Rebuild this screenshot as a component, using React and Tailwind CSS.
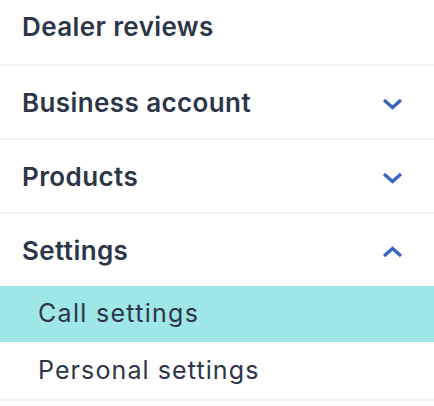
const font = { fontFamily: "Inter, 'Noto Sans', sans-serif" }

function Chevron({ up }) {
  return (
    <svg
      width="21"
      height="12"
      viewBox="0 0 21 12"
      className={`text-[#3a66c0] mr-[31px] ${up ? "rotate-180 mt-[4px]" : "mt-[4px]"}`}
      fill="none"
      stroke="currentColor"
      strokeWidth="3.4"
      strokeLinejoin="miter"
    >
      <polyline points="2,2 10.5,9.5 19,2" />
    </svg>
  )
}

function Header({ label, open, first }) {
  return (
    <div
      className={`flex items-center justify-between pl-[22px] border-b-2 border-[#f3f3f3] ${first ? "h-[66px] pb-[12px]" : "h-[74px]"}`}
    >
      <span className="text-[26px] font-semibold text-[#2d3648] tracking-[0.4px]">{label}</span>
      {open === undefined ? null : <Chevron up={open} />}
    </div>
  )
}

export default function App() {
  return (
    <div className="w-[434px] h-[406px] bg-white overflow-hidden" style={font}>
      <Header label="Dealer reviews" first />
      <Header label="Business account" open={false} />
      <Header label="Products" open={false} />
      <div className="border-b-2 border-[#f3f3f3]">
        <div className="flex items-center justify-between pl-[22px] h-[72px]">
          <span className="text-[26px] font-semibold text-[#2d3648] tracking-[0.4px]">Settings</span>
          <Chevron up />
        </div>
        <div className="h-[56px] flex items-center pl-[38px] bg-[#9fe7e7] text-[25px] text-[#2d3648] tracking-[1.3px]">
          Call settings
        </div>
        <div className="h-[57px] flex items-center pl-[38px] text-[25px] text-[#2d3648] tracking-[1.1px]">
          Personal settings
        </div>
      </div>
    </div>
  )
}
